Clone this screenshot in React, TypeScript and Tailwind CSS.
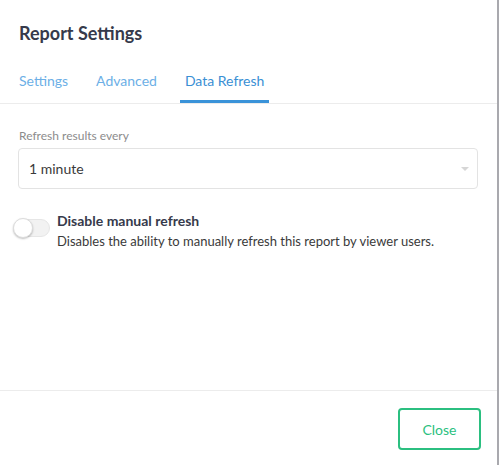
import { useState } from 'react';

const tabs = ['Settings', 'Advanced', 'Data Refresh'];

function Toggle({ on, onChange }: { on: boolean; onChange: (v: boolean) => void }) {
  return (
    <button
      type="button"
      onClick={() => onChange(!on)}
      className={`relative mt-[2px] h-[18px] w-[36px] shrink-0 rounded-full border border-[#e6e6e6] ${
        on ? 'bg-[#2bbf80]' : 'bg-[#f2f2f2]'
      }`}
    >
      <span
        className={`absolute top-[-2px] h-[20px] w-[20px] rounded-full border border-[#dcdcdc] bg-white shadow-[0_1px_2px_rgba(0,0,0,0.25)] ${
          on ? 'left-[15px]' : 'left-[-2px]'
        }`}
      />
    </button>
  );
}

export default function App() {
  const [active, setActive] = useState(2);
  const [disabled, setDisabled] = useState(false);

  return (
    <div
      className="flex h-[465px] w-[499px] flex-col border-r-2 border-[#a9a9ae] bg-white text-[#3a3a3a]"
      style={{ fontFamily: 'Lato, "Open Sans", sans-serif' }}
    >
      <div className="px-[19px] pt-[20px]">
        <h1 className="text-[18px] font-bold leading-[26px] text-[#363a4b]">Report Settings</h1>
      </div>

      <div className="mt-[25px] flex gap-[18px] border-b border-[#ececec] px-[14px]">
        {tabs.map((t, i) => (
          <button
            key={t}
            onClick={() => setActive(i)}
            className={`border-b-[3px] px-[5px] pb-[9px] text-[14px] leading-[20px] ${
              i === active ? 'border-[#3a93d9] text-[#3a8fd4]' : 'border-transparent text-[#6cafe6]'
            }`}
          >
            {t}
          </button>
        ))}
      </div>

      <div className="flex-1 px-[18px] pt-[24px]">
        <label className="block pl-[1px] text-[12px] leading-[16px] text-[#8c8c8c]">Refresh results every</label>
        <div className="mt-[4px] flex h-[41px] w-[460px] items-center justify-between rounded-[4px] border border-[#e3e3e3] pl-[10px] pr-[6px]">
          <span className="text-[14px] text-[#3a3a3a]">1 minute</span>
          <svg width="10" height="6" viewBox="0 0 10 6" className="mr-[1px]">
            <path d="M1 1 L5 5 L9 1 Z" fill="#d6d6d6" />
          </svg>
        </div>

        <div className="mt-[22px] flex gap-[7px]">
          <div className="-ml-[4px] pt-[6px]">
            <Toggle on={disabled} onChange={setDisabled} />
          </div>
          <div>
            <div className="text-[14px] font-bold leading-[20px] text-[#363a4b]">Disable manual refresh</div>
            <div className="text-[13px] leading-[20px] text-[#3a3a3a]">
              Disables the ability to manually refresh this report by viewer users.
            </div>
          </div>
        </div>
      </div>

      <div className="flex h-[75px] items-start justify-end border-t border-[#ececec] pr-[16px] pt-[17px]">
        <button className="h-[42px] w-[83px] rounded-[4px] border-2 border-[#2bbf80] text-[14px] text-[#2bbf80]">
          Close
        </button>
      </div>
    </div>
  );
}
